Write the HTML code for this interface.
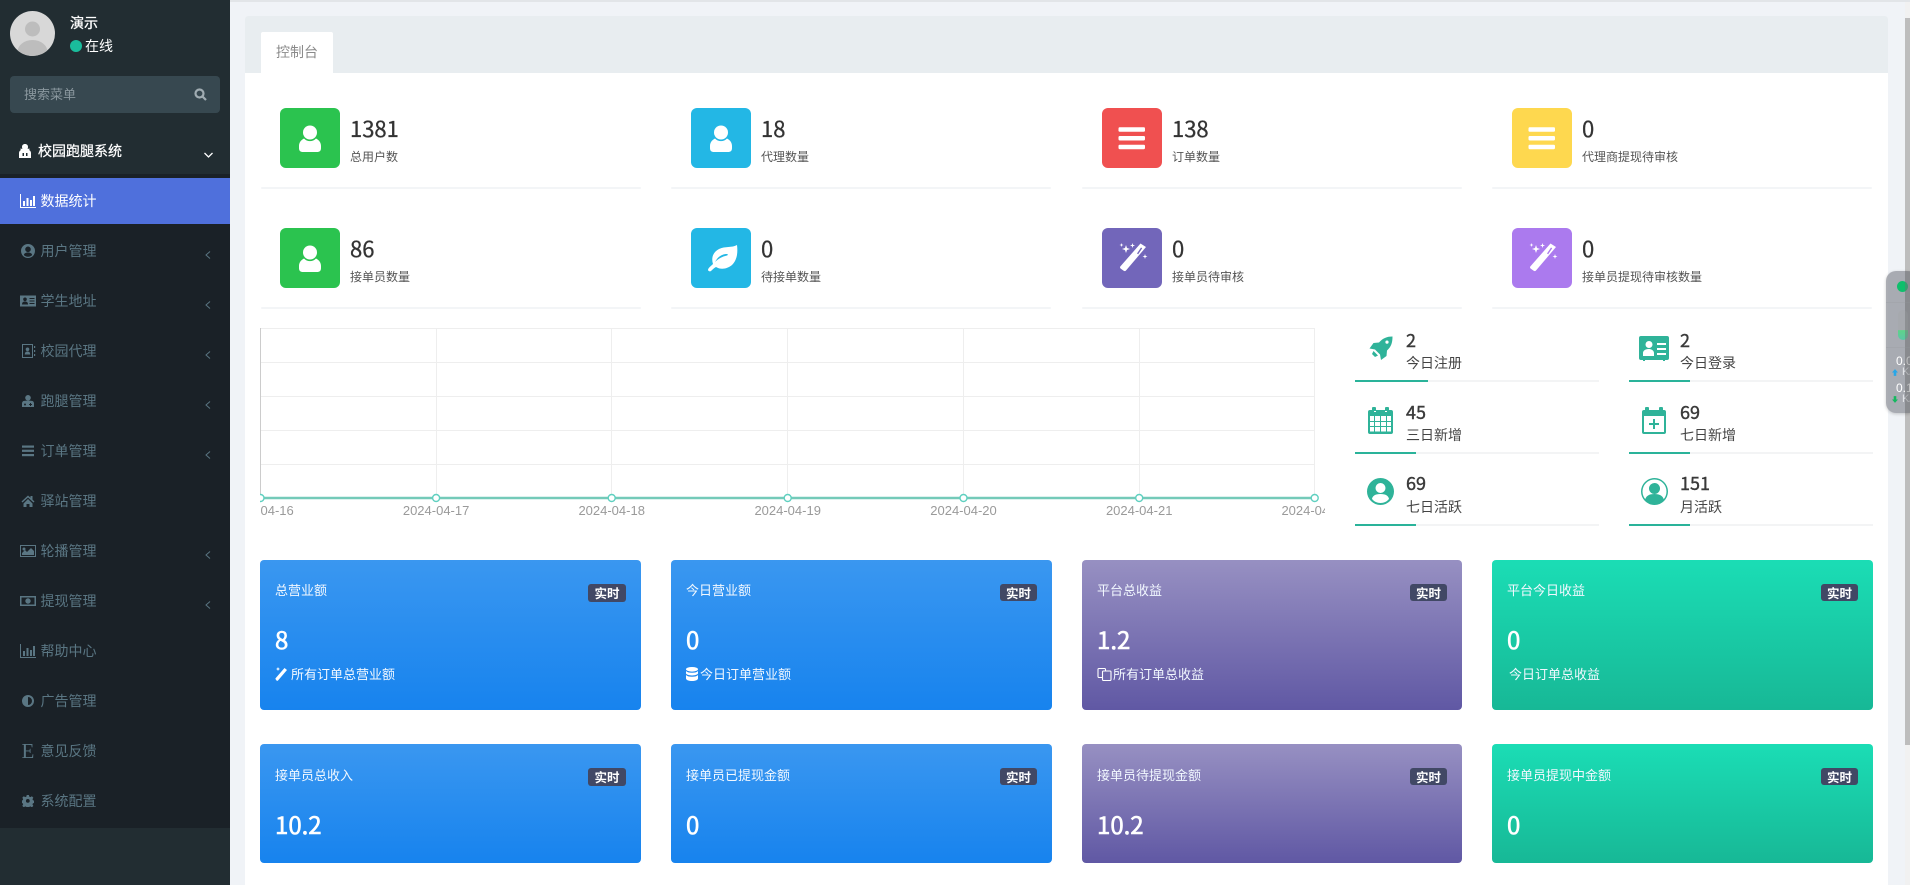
<!DOCTYPE html>
<html lang="zh"><head><meta charset="utf-8"><title>控制台</title>
<style>
html,body{margin:0;padding:0;width:1910px;height:885px;overflow:hidden;background:#f0f3f7;font-family:"Noto Sans CJK SC","Liberation Sans",sans-serif;font-size:14px}
div,span,svg{position:absolute}
.t{white-space:nowrap;line-height:20px}
.m{color:#5a7683;font-size:14px;left:40.500px}
.ic{left:20px;width:16px;height:16px;fill:#5a7683}
.ch{left:204px;width:8px;height:12px;fill:none;stroke:#5a7683;stroke-width:1}
.box{width:60px;height:60px;border-radius:6px}
.box svg{left:0;top:0;width:60px;height:60px;fill:#fff}
.n{font-size:22px;color:#333;line-height:30px;white-space:nowrap;-webkit-text-stroke:.3px #333}
.l{font-size:12px;color:#555;line-height:20px;white-space:nowrap}
.b{height:2px;width:380px;background:#f3f5f7;border-radius:2px}
.n2{font-size:18px;color:#3a3a3a;line-height:24px;-webkit-text-stroke:.4px #3a3a3a}
.l2{font-size:14px;color:#444;line-height:20px;white-space:nowrap}
.tr{height:2px;width:244px;background:#f3f4f5}
.tr i{position:absolute;left:0;top:0;height:2px;background:#2ab39a;display:block}
.si{fill:#2fb399}
.card{width:381px;border-radius:4px;color:#fff}
.blue{background:linear-gradient(#3a97f0,#1783ee)}
.pur{background:linear-gradient(#9790c2,#6058a4)}
.teal{background:linear-gradient(#1bddb5,#17b896)}
.ct{left:15px;top:20px;font-size:13px;line-height:20px;white-space:nowrap;color:#f2f8ff}
.cv{left:15px;top:61px;font-size:24px;line-height:36px;-webkit-text-stroke:.6px #fff}
.cf{top:104px;font-size:13px;line-height:20px;white-space:nowrap;color:#f2f8ff}
.bd{right:15px;top:24px;width:37px;height:17px;background:#414865;border-radius:3px;font-size:12.500px;font-weight:700;line-height:17px;text-align:center;color:#fff}
</style></head><body>

<svg width="0" height="0" style="left:0;top:0">
<defs>
<symbol id="bar" viewBox="0 0 16 16"><path d="M0 1h1v13h15v1H0zM3 8h2v5H3zM6.500 5h2v8h-2zM10 7h2v6h-2zM13 3h2v10h-2z"/></symbol>
<symbol id="person" viewBox="0 0 60 60"><circle cx="30" cy="24.500" r="7"/><path d="M24 30.500c3 3.500 9 3.500 12 0 3 1.500 5 4 5 7.500v2c0 3-1.500 4-4 4H23c-2.500 0-4-1-4-4v-2c0-3.500 2-6 5-7.500z"/></symbol>
<symbol id="bars3" viewBox="0 0 60 60"><rect x="16.500" y="19.300" width="26.500" height="4.500" rx="1.200"/><rect x="16.500" y="28" width="26.500" height="4.500" rx="1.200"/><rect x="16.500" y="36.700" width="26.500" height="4.500" rx="1.200"/></symbol>
<symbol id="wand" viewBox="0 0 60 60"><path fill-rule="evenodd" d="M38.500 15.500l5.500 3.500-20 23.500c-.8.800-1.500.8-2.300.300l-3-2.200c-.8-.6-.8-1.400-.4-2.100zM39 19.500l-4 6 1.200.8 4-6z"/><path d="M24 17l1 3 3 1-3 1-1 3-1-3-3-1 3-1zM30.500 15l.6 1.900 1.900.6-1.900.6-.6 1.900-.6-1.900-1.900-.6 1.900-.6zM19.500 15l.5 1.500 1.500.5-1.500.5-.5 1.500-.5-1.500-1.500-.5 1.500-.5zM43 26l.6 1.900 1.900.6-1.900.6-.6 1.900-.6-1.900-1.900-.6 1.900-.6z"/></symbol>
<symbol id="leaf" viewBox="0 0 60 60"><path fill-rule="evenodd" d="M46 17c1 8 0 15-5 20-5 4-11 5-16 2-2 1-4 3-5 4-1 .8-3 0-3-1 0-2 3-4 5-6-2-6 0-12 6-15 6-3 13-1 18-4zM36 26c-5 0-9 2.500-12 8 3-3 7-5.500 12-6.500 1-.3 1-1.500 0-1.500z"/></symbol>
</defs></svg>

<!-- sidebar -->
<div style="left:0;top:0;width:230px;height:885px;background:#222d32"></div>
<div style="left:10px;top:11px;width:45px;height:45px;border-radius:50%;background:#d8d8d8;overflow:hidden">
 <svg width="45" height="45" viewBox="0 0 45 45" style="left:0;top:0"><circle cx="22.500" cy="18" r="7.500" fill="#bdbdbd"/><ellipse cx="22.500" cy="41" rx="15" ry="12" fill="#bdbdbd"/></svg>
</div>
<div class="t" style="left:70px;top:13px;color:#fff;-webkit-text-stroke:.3px #fff">演示</div>
<div style="left:70px;top:40px;width:12px;height:12px;border-radius:50%;background:#1abc9c"></div>
<div class="t" style="left:85px;top:36px;color:#fff">在线</div>
<div style="left:10px;top:76px;width:210px;height:37px;background:#374850;border-radius:4px"></div>
<div class="t" style="left:24px;top:84px;color:#8a979e;font-size:13px">搜索菜单</div>
<svg style="left:194px;top:88px" width="13" height="13" viewBox="0 0 13 13" fill="none" stroke="#a0acb2" stroke-width="2.200"><circle cx="5.500" cy="5.500" r="4"/><path d="M8.500 8.500L12 12"/></svg>

<svg style="left:19px;top:144px" width="12" height="14" viewBox="0 0 12 14" fill="#fff"><path d="M6 0c2 0 3 1.200 3 3 0 .7-.2 1.300-.5 1.800H11l-1 1.200c1.300.6 2 1.700 2 3V14H0V9c0-1.300.7-2.400 2-3L1 4.800h2.500C3.200 4.300 3 3.700 3 3c0-1.800 1-3 3-3zM3.500 9v3h1.500V9zm3.500 0v3h1.500V9z" fill-rule="evenodd"/></svg>
<div class="t" style="left:38px;top:141px;color:#fff;-webkit-text-stroke:.25px #fff">校园跑腿系统</div>
<svg style="left:204px;top:152px" width="9" height="6" viewBox="0 0 9 6" fill="none" stroke="#fff" stroke-width="1.300"><path d="M.5 1l4 4 4-4"/></svg>

<div style="left:0;top:174px;width:230px;height:654px;background:#1a2127"></div>
<div style="left:0;top:178px;width:230px;height:46px;background:#4f70dc"></div>

<svg class="ic" style="top:193px;fill:#fff"><use href="#bar"/></svg>
<div class="t" style="left:40.500px;top:191px;color:#fff">数据统计</div>

<svg class="ic" style="top:243px" viewBox="0 0 16 16"><path fill-rule="evenodd" d="M8 1a7 7 0 100 14A7 7 0 008 1zm0 2.500a2.800 2.800 0 110 5.600 2.800 2.800 0 010-5.600zM3.800 12c.5-1.800 2-2.500 4.200-2.500s3.700.7 4.200 2.500A5.600 5.600 0 018 13.700 5.600 5.600 0 013.800 12z"/></svg>
<div class="t m" style="top:241px">用户管理</div>
<svg class="ch" style="top:249px" viewBox="0 0 8 12"><path d="M6 2.500L2 6l4 3.500"/></svg>

<svg class="ic" style="top:293px" viewBox="0 0 16 16"><path fill-rule="evenodd" d="M0 2.500h16v11H0zM5 4.500a1.800 1.800 0 100 3.600 1.800 1.800 0 000-3.600zM2 11.500h6c0-2-1-3-3-3s-3 1-3 3zM9.500 5v1h5V5zm0 2.500v1h5v-1zm0 2.500v1h5v-1z"/></svg>
<div class="t m" style="top:291px">学生地址</div>
<svg class="ch" style="top:299px" viewBox="0 0 8 12"><path d="M6 2.500L2 6l4 3.500"/></svg>

<svg class="ic" style="top:343px" viewBox="0 0 16 16"><path fill-rule="evenodd" d="M2 1h11v14H2zM3 2v12h9V2zM7.500 4.500a1.800 1.800 0 110 3.600 1.800 1.800 0 010-3.600zM4.800 11.500c0-2 1-3 2.700-3s2.700 1 2.700 3zM14 3h1.200v2H14zm0 4h1.200v2H14zm0 4h1.200v2H14z"/></svg>
<div class="t m" style="top:341px">校园代理</div>
<svg class="ch" style="top:349px" viewBox="0 0 8 12"><path d="M6 2.500L2 6l4 3.500"/></svg>

<svg style="left:22px;top:395px;fill:#5a7683" width="12" height="12" viewBox="0 0 12 12"><circle cx="6" cy="2.800" r="2.800"/><path d="M1.500 6c1.500-.5 7.500-.5 9 0 1 .4 1.500 1.500 1.500 2.500V12H0V8.500C0 7.500.5 6.400 1.500 6zM3 8.500a1 1 0 100 2 1 1 0 000-2zM8 8v1H7v1h1v1h1v-1h1V9H9V8z" fill-rule="evenodd"/></svg>
<div class="t m" style="top:391px">跑腿管理</div>
<svg class="ch" style="top:399px" viewBox="0 0 8 12"><path d="M6 2.500L2 6l4 3.500"/></svg>

<svg class="ic" style="top:443px" viewBox="0 0 16 16"><rect x="2" y="2.500" width="12" height="2.200"/><rect x="2" y="6.700" width="12" height="2.200"/><rect x="2" y="11" width="12" height="2.200"/></svg>
<div class="t m" style="top:441px">订单管理</div>
<svg class="ch" style="top:449px" viewBox="0 0 8 12"><path d="M6 2.500L2 6l4 3.500"/></svg>

<svg class="ic" style="top:493px" viewBox="0 0 16 16"><path d="M8 2.500L1.500 8.500l1 1L8 4.500l5.500 5 1-1-2-1.900V3h-2v1.700zM3.500 10.500L8 6l4.500 4.500V14H9.500v-3h-3v3h-3z"/></svg>
<div class="t m" style="top:491px">驿站管理</div>

<svg class="ic" style="top:543px" viewBox="0 0 16 16"><path fill-rule="evenodd" d="M0 2h16v12H0zM1 3v10h14V3zM2 12V10l3-3 2 2 4-4 3 3v4zM4 4.500a1.500 1.500 0 110 3 1.500 1.500 0 010-3z"/></svg>
<div class="t m" style="top:541px">轮播管理</div>
<svg class="ch" style="top:549px" viewBox="0 0 8 12"><path d="M6 2.500L2 6l4 3.500"/></svg>

<svg class="ic" style="top:593px" viewBox="0 0 16 16"><path fill-rule="evenodd" d="M0 3h16v10H0zM1.500 4.500v7h13v-7zM8 5.300a2.700 2.700 0 110 5.400 2.700 2.700 0 010-5.400z"/></svg>
<div class="t m" style="top:591px">提现管理</div>
<svg class="ch" style="top:599px" viewBox="0 0 8 12"><path d="M6 2.500L2 6l4 3.500"/></svg>

<svg class="ic" style="top:643px"><use href="#bar"/></svg>
<div class="t m" style="top:641px">帮助中心</div>

<svg class="ic" style="top:693px" viewBox="0 0 16 16"><path fill-rule="evenodd" d="M8 2a6 6 0 100 12A6 6 0 008 2zm0 2v8a4 4 0 000-8z"/></svg>
<div class="t m" style="top:691px">广告管理</div>

<div class="t" style="left:21.500px;top:741px;color:#5a7683;font-family:'Liberation Serif',serif;font-size:21px">E</div>
<div class="t m" style="top:741px">意见反馈</div>

<svg style="left:22px;top:795px;fill:#5a7683" width="12" height="12" viewBox="0 0 16 16"><path fill-rule="evenodd" d="M6.500 0h3l.5 2.200 1.600.7 2-1.200 2 2-1.200 2 .7 1.600 2 .5v3l-2 .5-.7 1.600 1.200 2-2 2-2-1.200-1.600.7-.5 2h-3l-.5-2-1.600-.7-2 1.200-2-2 1.200-2-.7-1.600-2-.5v-3l2-.5.7-1.600-1.200-2 2-2 2 1.200 1.600-.7zM8 5.500a2.600 2.600 0 100 5.200 2.600 2.600 0 000-5.200z" transform="scale(.97)"/></svg>
<div class="t m" style="top:791px">系统配置</div>

<!-- main -->
<div style="left:230px;top:0;width:1680px;height:2px;background:#e2e5e8"></div>
<div style="left:245px;top:16px;width:1643px;height:869px;background:#fff;border-radius:3px 3px 0 0"></div>
<div style="left:245px;top:16px;width:1643px;height:57px;background:#e8edf0;border-radius:3px 3px 0 0"></div>
<div style="left:261px;top:32px;width:72px;height:41px;background:#fff;border-radius:2px 2px 0 0"></div>
<div class="t" style="left:276px;top:42px;color:#8a8a8a">控制台</div>

<!-- stats row 1 -->
<div class="box" style="left:280px;top:108px;background:#2bc34f"><svg><use href="#person"/></svg></div>
<div class="n" style="left:350px;top:113px">1381</div><div class="l" style="left:350px;top:147px">总用户数</div>
<div class="b" style="left:261px;top:187px"></div>

<div class="box" style="left:691px;top:108px;background:#23b7e5"><svg><use href="#person"/></svg></div>
<div class="n" style="left:761px;top:113px">18</div><div class="l" style="left:761px;top:147px">代理数量</div>
<div class="b" style="left:671px;top:187px"></div>

<div class="box" style="left:1102px;top:108px;background:#f05050"><svg><use href="#bars3"/></svg></div>
<div class="n" style="left:1172px;top:113px">138</div><div class="l" style="left:1172px;top:147px">订单数量</div>
<div class="b" style="left:1082px;top:187px"></div>

<div class="box" style="left:1512px;top:108px;background:#fed84f"><svg><use href="#bars3"/></svg></div>
<div class="n" style="left:1582px;top:113px">0</div><div class="l" style="left:1582px;top:147px">代理商提现待审核</div>
<div class="b" style="left:1492px;top:187px"></div>

<!-- stats row 2 -->
<div class="box" style="left:280px;top:228px;background:#2bc34f"><svg><use href="#person"/></svg></div>
<div class="n" style="left:350px;top:233px">86</div><div class="l" style="left:350px;top:267px">接单员数量</div>
<div class="b" style="left:261px;top:307px"></div>

<div class="box" style="left:691px;top:228px;background:#23b7e5"><svg><use href="#leaf"/></svg></div>
<div class="n" style="left:761px;top:233px">0</div><div class="l" style="left:761px;top:267px">待接单数量</div>
<div class="b" style="left:671px;top:307px"></div>

<div class="box" style="left:1102px;top:228px;background:#7266ba"><svg><use href="#wand"/></svg></div>
<div class="n" style="left:1172px;top:233px">0</div><div class="l" style="left:1172px;top:267px">接单员待审核</div>
<div class="b" style="left:1082px;top:307px"></div>

<div class="box" style="left:1512px;top:228px;background:#ab7aee"><svg><use href="#wand"/></svg></div>
<div class="n" style="left:1582px;top:233px">0</div><div class="l" style="left:1582px;top:267px">接单员提现待审核数量</div>
<div class="b" style="left:1492px;top:307px"></div>

<!-- chart -->
<svg style="left:260px;top:320px" width="1065" height="210" viewBox="0 0 1065 210">
 <g stroke="#eeeeee" fill="none" stroke-width="1">
  <path d="M1 8.500H1055M1 42.500H1055M1 76.500H1055M1 110.500H1055M1 144.500H1055"/>
  <path d="M176.500 8V178M351.500 8V178M527.500 8V178M703.500 8V178M879.500 8V178M1054.500 8V178"/>
 </g>
 <path d="M.5 8V178" stroke="#cccccc" fill="none"/>
 <path d="M0 178H1055" stroke="#74cab9" stroke-width="2.500" fill="none"/>
 <g fill="#fff" stroke="#5fd0c0" stroke-width="1.400">
  <circle cx="0.500" cy="178" r="3.500"/><circle cx="176.100" cy="178" r="3.500"/><circle cx="351.700" cy="178" r="3.500"/><circle cx="527.700" cy="178" r="3.500"/><circle cx="703.500" cy="178" r="3.500"/><circle cx="879.200" cy="178" r="3.500"/><circle cx="1054.700" cy="178" r="3.500"/>
 </g>
 <g fill="#9a9a9a" font-size="13" font-family="'Liberation Sans',sans-serif" text-anchor="middle">
  <text x="0.500" y="195">2024-04-16</text><text x="176.100" y="195">2024-04-17</text><text x="351.700" y="195">2024-04-18</text><text x="527.700" y="195">2024-04-19</text><text x="703.500" y="195">2024-04-20</text><text x="879.200" y="195">2024-04-21</text><text x="1054.700" y="195">2024-04-22</text>
 </g>
</svg>

<!-- right mini stats -->
<svg class="si" style="left:1369px;top:336px" width="24" height="24" viewBox="0 0 24 24"><path fill-rule="evenodd" d="M23.500.5C23.500 7 22 11 18 14.500l-.5 5.500-5.500 4-1-5.500-5-5-5.500-1 4-5.500 5.500-.5C14 2 18 .5 23.500.5zM18 4.500a1.600 1.600 0 100 3.200 1.600 1.600 0 000-3.200z"/><path d="M4.500 15l4.500 4.500-3 1.500-3-3z"/></svg>
<div class="n2" style="left:1406px;top:328px">2</div><div class="l2" style="left:1406px;top:353px">今日注册</div>
<div class="tr" style="left:1355px;top:380px"><i style="width:73px"></i></div>

<svg class="si" style="left:1639px;top:336px" width="30" height="25" viewBox="0 0 30 25"><path fill-rule="evenodd" d="M2 0h26a2 2 0 012 2v20a2 2 0 01-2 2h-2v1h-2v-1H6v1H4v-1H2a2 2 0 01-2-2V2a2 2 0 012-2zM10 5a3.500 3.500 0 100 7 3.500 3.500 0 000-7zM4 20h11v-3c0-2-2-4-5.500-4S4 15 4 17zM18 7v2h9V7zm0 5v2h9v-2zm0 5v2h9v-2z"/></svg>
<div class="n2" style="left:1680px;top:328px">2</div><div class="l2" style="left:1680px;top:353px">今日登录</div>
<div class="tr" style="left:1629px;top:380px"><i style="width:61px"></i></div>

<svg class="si" style="left:1368px;top:407px" width="25" height="27" viewBox="0 0 25 27"><path fill-rule="evenodd" d="M5 0h2a1 1 0 011 1v3H6v1h2V3h9v2h2V4h-2V1a1 1 0 011-1h2a1 1 0 011 1v2h2a2 2 0 012 2v20a2 2 0 01-2 2H2a2 2 0 01-2-2V5a2 2 0 012-2h2V1a1 1 0 011-1zM2 9v5h4V9zm5 0v5h5V9zm6 0v5h5V9zm6 0v5h4V9zM2 15v4h4v-4zm5 0v4h5v-4zm6 0v4h5v-4zm6 0v4h4v-4zM2 20v4.500h4V20zm5 0v4.500h5V20zm6 0v4.500h5V20zm6 0v4.500h4V20z"/></svg>
<div class="n2" style="left:1406px;top:400px">45</div><div class="l2" style="left:1406px;top:425px">三日新增</div>
<div class="tr" style="left:1355px;top:452px"><i style="width:61px"></i></div>

<svg class="si" style="left:1642px;top:407px" width="24" height="27" viewBox="0 0 24 27"><path fill-rule="evenodd" d="M4 0h2a1 1 0 011 1v2h10V1a1 1 0 011-1h2a1 1 0 011 1v2h1a2 2 0 012 2v20a2 2 0 01-2 2H2a2 2 0 01-2-2V5a2 2 0 012-2h1V1a1 1 0 011-1zM2 9v16h20V9zM11 12h2v4h4v2h-4v4h-2v-4H7v-2h4z"/></svg>
<div class="n2" style="left:1680px;top:400px">69</div><div class="l2" style="left:1680px;top:425px">七日新增</div>
<div class="tr" style="left:1629px;top:452px"><i style="width:61px"></i></div>

<svg class="si" style="left:1367px;top:478px" width="27" height="27" viewBox="0 0 27 27"><path fill-rule="evenodd" d="M13.500 0a13.500 13.500 0 100 27 13.500 13.500 0 000-27zm0 5a5 5 0 110 10 5 5 0 010-10zM5 21c.5-3 3-5 8.500-5s8 2 8.500 5a11 11 0 01-8.500 4A11 11 0 015 21z"/></svg>
<div class="n2" style="left:1406px;top:471px">69</div><div class="l2" style="left:1406px;top:497px">七日活跃</div>
<div class="tr" style="left:1355px;top:524px"><i style="width:61px"></i></div>

<svg class="si" style="left:1641px;top:478px" width="27" height="27" viewBox="0 0 27 27"><path fill-rule="evenodd" d="M13.500 0a13.500 13.500 0 100 27 13.500 13.500 0 000-27zm0 1.500a12 12 0 110 24 12 12 0 010-24z"/><circle cx="13.500" cy="10.500" r="5.500"/><path d="M4 22c1-4 4-6 9.500-6s8.500 2 9.500 6c-2 2-6 4-9.500 4S6 24 4 22z"/></svg>
<div class="n2" style="left:1680px;top:471px">151</div><div class="l2" style="left:1680px;top:497px">月活跃</div>
<div class="tr" style="left:1629px;top:524px"><i style="width:61px"></i></div>

<!-- cards row 1 -->
<div class="card blue" style="left:260px;top:560px;height:150px">
 <div class="ct">总营业额</div><div class="bd" style="width:38px;height:18px;line-height:18px">实时</div><div class="cv">8</div>
 <svg style="left:15px;top:107px" width="13" height="14" viewBox="0 0 13 14" fill="#fff"><path d="M9.500 1L12 3 3 13.500c-.5.500-1 .5-1.500 0L.8 12.500c-.5-.5-.5-1 0-1.500z"/><path d="M3 0l.6 1.400L5 2l-1.400.6L3 4l-.6-1.400L1 2l1.400-.6z"/></svg>
 <div class="cf" style="left:31px">所有订单总营业额</div>
</div>
<div class="card blue" style="left:671px;top:560px;height:150px">
 <div class="ct">今日营业额</div><div class="bd">实时</div><div class="cv">0</div>
 <svg style="left:15px;top:107px" width="12" height="14" viewBox="0 0 12 14" fill="#fff"><ellipse cx="6" cy="2.300" rx="6" ry="2.300"/><path d="M0 4c1 1.200 3 1.800 6 1.800S11 5.200 12 4v2.300C12 7.500 9 8.500 6 8.500S0 7.500 0 6.300zM0 8c1 1.200 3 1.800 6 1.800S11 9.200 12 8v3.500C12 13 9 14 6 14S0 13 0 11.500z"/></svg>
 <div class="cf" style="left:29px">今日订单营业额</div>
</div>
<div class="card pur" style="left:1082px;top:560px;height:150px;width:380px">
 <div class="ct">平台总收益</div><div class="bd">实时</div><div class="cv">1.2</div>
 <svg style="left:15px;top:107px" width="15" height="14" viewBox="0 0 15 14" fill="none" stroke="#fff" stroke-width="1.100"><rect x="1" y="1.500" width="7.500" height="9" rx="1"/><rect x="5.500" y="4" width="8.500" height="9.500" rx="1" fill="#6f68ac"/></svg>
 <div class="cf" style="left:31px">所有订单总收益</div>
</div>
<div class="card teal" style="left:1492px;top:560px;height:150px">
 <div class="ct">平台今日收益</div><div class="bd">实时</div><div class="cv">0</div>
 <div class="cf" style="left:17px">今日订单总收益</div>
</div>

<!-- cards row 2 -->
<div class="card blue" style="left:260px;top:744px;height:119px">
 <div class="ct" style="top:21px">接单员总收入</div><div class="bd" style="width:38px;height:18px;line-height:18px">实时</div><div class="cv" style="top:62px">10.2</div>
</div>
<div class="card blue" style="left:671px;top:744px;height:119px">
 <div class="ct" style="top:21px">接单员已提现金额</div><div class="bd">实时</div><div class="cv" style="top:62px">0</div>
</div>
<div class="card pur" style="left:1082px;top:744px;height:119px;width:380px">
 <div class="ct" style="top:21px">接单员待提现金额</div><div class="bd">实时</div><div class="cv" style="top:62px">10.2</div>
</div>
<div class="card teal" style="left:1492px;top:744px;height:119px">
 <div class="ct" style="top:21px">接单员提现中金额</div><div class="bd">实时</div><div class="cv" style="top:62px">0</div>
</div>

<!-- scrollbar -->
<div style="left:1905px;top:2px;width:5px;height:883px;background:#f1f1f1"></div>
<div style="left:1905px;top:18px;width:5px;height:727px;background:#bdbdbd"></div>

<!-- floating widget -->
<div style="left:1886px;top:271px;width:30px;height:142px;border-radius:10px;background:rgba(150,153,160,.8);overflow:hidden;box-shadow:0 1px 3px rgba(0,0,0,.2)">
 <div style="left:11px;top:10px;width:11px;height:11px;border-radius:50%;background:#0fbf6c"></div>
 <div style="left:0;top:31px;width:30px;height:1px;background:#a3a6ac"></div>
 <div style="left:12px;top:39px;width:10px;height:30px;border-radius:5px;background:linear-gradient(#a6a9ae 66%,#5fd38a 68%,#5cc6a6)"></div>
 <div style="left:0;top:76px;width:30px;height:1px;background:#a3a6ac"></div>
 <div class="t" style="left:10px;top:80px;color:#fff;font-size:12px;font-family:'Liberation Sans',sans-serif">0.0</div>
 <div class="t" style="left:16px;top:91px;color:#e4e6ea;font-size:11px;font-family:'Liberation Sans',sans-serif">K/s</div>
 <svg style="left:6px;top:98px" width="6" height="7" viewBox="0 0 7 8" fill="#28a7e8"><path d="M3.500 0L7 4H5v4H2V4H0z"/></svg>
 <div class="t" style="left:10px;top:107px;color:#fff;font-size:12px;font-family:'Liberation Sans',sans-serif">0.1</div>
 <div class="t" style="left:16px;top:118px;color:#e4e6ea;font-size:11px;font-family:'Liberation Sans',sans-serif">K/s</div>
 <svg style="left:6px;top:125px" width="6" height="7" viewBox="0 0 7 8" fill="#14b85f"><path d="M3.500 8L7 4H5V0H2v4H0z"/></svg>
</div>
<div style="left:1905px;top:271px;width:5px;height:142px;background:rgba(110,112,116,.45)"></div>

</body></html>
